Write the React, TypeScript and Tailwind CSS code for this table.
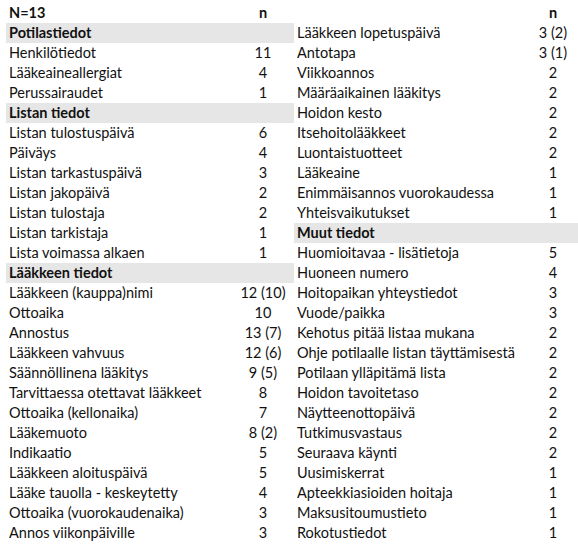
import React from "react";

type Row = { label: string; n?: string; head?: boolean; bold?: boolean };

const left: Row[] = [
  { label: "N=13", n: "n", bold: true },
  { label: "Potilastiedot", head: true },
  { label: "Henkilötiedot", n: "11" },
  { label: "Lääkeaineallergiat", n: "4" },
  { label: "Perussairaudet", n: "1" },
  { label: "Listan tiedot", head: true },
  { label: "Listan tulostuspäivä", n: "6" },
  { label: "Päiväys", n: "4" },
  { label: "Listan tarkastuspäivä", n: "3" },
  { label: "Listan jakopäivä", n: "2" },
  { label: "Listan tulostaja", n: "2" },
  { label: "Listan tarkistaja", n: "1" },
  { label: "Lista voimassa alkaen", n: "1" },
  { label: "Lääkkeen tiedot", head: true },
  { label: "Lääkkeen (kauppa)nimi", n: "12 (10)" },
  { label: "Ottoaika", n: "10" },
  { label: "Annostus", n: "13 (7)" },
  { label: "Lääkkeen vahvuus", n: "12 (6)" },
  { label: "Säännöllinena lääkitys", n: "9 (5)" },
  { label: "Tarvittaessa otettavat lääkkeet", n: "8" },
  { label: "Ottoaika (kellonaika)", n: "7" },
  { label: "Lääkemuoto", n: "8 (2)" },
  { label: "Indikaatio", n: "5" },
  { label: "Lääkkeen aloituspäivä", n: "5" },
  { label: "Lääke tauolla - keskeytetty", n: "4" },
  { label: "Ottoaika (vuorokaudenaika)", n: "3" },
  { label: "Annos viikonpäiville", n: "3" },
];

const right: Row[] = [
  { label: "", n: "n", bold: true },
  { label: "Lääkkeen lopetuspäivä", n: "3 (2)" },
  { label: "Antotapa", n: "3 (1)" },
  { label: "Viikkoannos", n: "2" },
  { label: "Määräaikainen lääkitys", n: "2" },
  { label: "Hoidon kesto", n: "2" },
  { label: "Itsehoitolääkkeet", n: "2" },
  { label: "Luontaistuotteet", n: "2" },
  { label: "Lääkeaine", n: "1" },
  { label: "Enimmäisannos vuorokaudessa", n: "1" },
  { label: "Yhteisvaikutukset", n: "1" },
  { label: "Muut tiedot", head: true },
  { label: "Huomioitavaa - lisätietoja", n: "5" },
  { label: "Huoneen numero", n: "4" },
  { label: "Hoitopaikan yhteystiedot", n: "3" },
  { label: "Vuode/paikka", n: "3" },
  { label: "Kehotus pitää listaa mukana", n: "2" },
  { label: "Ohje potilaalle listan täyttämisestä", n: "2" },
  { label: "Potilaan ylläpitämä lista", n: "2" },
  { label: "Hoidon tavoitetaso", n: "2" },
  { label: "Näytteenottopäivä", n: "2" },
  { label: "Tutkimusvastaus", n: "2" },
  { label: "Seuraava käynti", n: "2" },
  { label: "Uusimiskerrat", n: "1" },
  { label: "Apteekkiasioiden hoitaja", n: "1" },
  { label: "Maksusitoumustieto", n: "1" },
  { label: "Rokotustiedot", n: "1" },
];

function Column({ rows, side }: { rows: Row[]; side: "l" | "r" }) {
  return (
    <div className={side === "l" ? "flex w-[288px] flex-col" : "flex w-[284px] flex-col"}>
      {rows.map((r, i) => (
        <div
          key={i}
          className={
            (r.head ? "bg-[#e7e6e6] font-bold " : "") +
            (side === "l" ? "flex h-[20px] items-center pr-[5px]" : "flex h-[20px] items-center")
          }
        >
          <div className={(r.bold ? "font-bold " : "") + "flex-1 truncate pl-[3px]"}>{r.label}</div>
          {r.n !== undefined && (
            <div
              className={
                (r.bold ? "font-bold " : "") +
                (side === "l" ? "w-[52px] text-center" : "w-[50px] text-center")
              }
            >
              {r.n}
            </div>
          )}
        </div>
      ))}
    </div>
  );
}

export default function App() {
  return (
    <div className="flex h-[557px] w-[578px] bg-white pl-[6px] pt-[3px] font-['Lato',sans-serif] text-[14.5px] leading-[20px] text-[#111]">
      <Column rows={left} side="l" />
      <Column rows={right} side="r" />
    </div>
  );
}
